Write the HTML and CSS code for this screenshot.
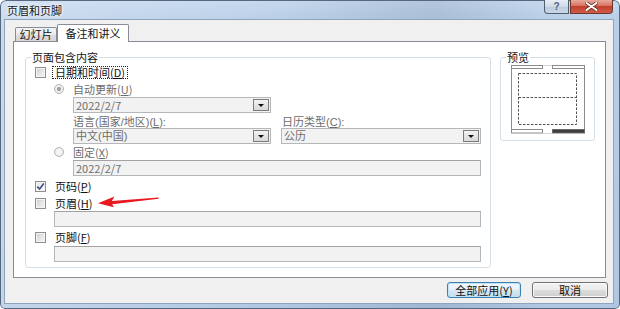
FILE: index.html
```html
<!DOCTYPE html>
<html lang="zh-CN">
<head>
<meta charset="utf-8">
<title>页眉和页脚</title>
<link rel="stylesheet" href="styles.css">
</head>
<body>
<div class="window">
  <div class="titlebar">
    <span class="title">页眉和页脚</span>
    <div class="caption">
      <div class="cap-btn cap-help">?</div>
      <div class="cap-btn cap-close">
        <svg width="13" height="9" viewBox="0 0 13 9"><path d="M1.5 1 L11.5 8 M11.5 1 L1.5 8" stroke="#6a2c26" stroke-width="3.4" stroke-linecap="round"/><path d="M1.5 1 L11.5 8 M11.5 1 L1.5 8" stroke="#fff" stroke-width="2" stroke-linecap="round"/></svg>
      </div>
    </div>
  </div>
  <div class="client">
    <div class="tabs">
      <div class="tab">幻灯片</div>
      <div class="tab active">备注和讲义</div>
    </div>
    <div class="panel">
      <div class="group main">
        <div class="legend">页面包含内容</div>
        <div class="row row-1">
          <span class="cb"></span><span class="label focus">日期和时间(<u>D</u>)</span>
        </div>
        <div class="row radio-row row-2">
          <span class="rb on"></span><span class="label dis">自动更新(<u>U</u>)</span>
        </div>
        <div class="combo combo-1"><span class="ctext">2022/2/7</span><span class="drop"></span></div>
        <div class="pair-labels">
          <span class="dis">语言(国家/地区)(<u>L</u>):</span>
          <span class="dis second">日历类型(<u>C</u>):</span>
        </div>
        <div class="pair-combos">
          <div class="combo"><span class="ctext">中文(中国)</span><span class="drop"></span></div>
          <div class="combo"><span class="ctext">公历</span><span class="drop"></span></div>
        </div>
        <div class="row radio-row row-fixed">
          <span class="rb"></span><span class="label dis">固定(<u>X</u>)</span>
        </div>
        <div class="textbox tb-fixed"><span class="ctext">2022/2/7</span></div>
        <div class="row row-page">
          <span class="cb checked"><svg width="9" height="9" viewBox="0 0 9 9"><path d="M1.3 4.6 L3.6 7 L7.8 1.6" fill="none" stroke="#3a4f86" stroke-width="1.6"/></svg></span><span class="label">页码(<u>P</u>)</span>
        </div>
        <div class="row row-header">
          <span class="cb"></span><span class="label">页眉(<u>H</u>)</span>
          <svg class="arrow" width="63" height="13" viewBox="0 0 63 13"><polygon points="1,8.3 17.5,1.5 14.8,5.9 61.5,2.4 61.5,3.8 15.2,9.2 16.8,12.3" fill="#e8191f"/></svg>
        </div>
        <div class="textbox tb-wide"></div>
        <div class="row row-footer">
          <span class="cb"></span><span class="label">页脚(<u>F</u>)</span>
        </div>
        <div class="textbox tb-wide tb-last"></div>
      </div>
      <div class="group preview">
        <div class="legend">预览</div>
        <svg class="pv" width="74" height="69" viewBox="0 0 74 69">
          <line x1="0.5" y1="3" x2="0.5" y2="66" stroke="#8c8c8c"/>
          <line x1="73.5" y1="3" x2="73.5" y2="66" stroke="#8c8c8c"/>
          <line x1="32" y1="0.5" x2="41" y2="0.5" stroke="#d4d4d4"/>
          <line x1="32" y1="68.5" x2="41" y2="68.5" stroke="#d4d4d4"/>
          <rect x="0.5" y="0.5" width="31" height="3" fill="#fff" stroke="#8c8c8c"/>
          <rect x="41.5" y="0.5" width="32" height="3" fill="#fff" stroke="#8c8c8c"/>
          <rect x="7.5" y="8.5" width="58" height="51" fill="none" stroke="#505050" stroke-dasharray="2.5 1.5"/>
          <line x1="7.5" y1="32.5" x2="65.5" y2="32.5" stroke="#505050" stroke-dasharray="2.5 1.5"/>
          <rect x="0.5" y="64.5" width="31" height="3.5" fill="#fff" stroke="#8c8c8c"/>
          <rect x="41.5" y="64.5" width="32" height="3.5" fill="#3c3c3c" stroke="#6a6a6a"/>
        </svg>
      </div>
    </div>
    <div class="buttons">
      <button class="btn btn-default">全部应用(<u>Y</u>)</button>
      <button class="btn btn-cancel">取消</button>
    </div>
  </div>
</div>
</body>
</html>
```

FILE: styles.css
```css
* { box-sizing: border-box; }
html, body { margin: 0; padding: 0; background: #ffffff; }
body {
  width: 620px;
  height: 309px;
  overflow: hidden;
  font-family: "Noto Sans CJK SC", "Noto Sans", sans-serif;
  font-size: 11px;
  color: #111;
}
u { text-decoration-thickness: 1px; text-underline-offset: 1px; }

.window {
  width: 620px;
  height: 309px;
  display: flex;
  flex-direction: column;
  border-radius: 6px 6px 5px 5px;
  overflow: hidden;
  background:
    linear-gradient(90deg, rgba(255,255,255,0.25) 0, rgba(255,255,255,0) 45%, rgba(90,110,135,0.18) 70%, rgba(255,255,255,0) 88%),
    linear-gradient(180deg, #c6d9ee 0, #b9cfe8 20px, #afc7e3 100%);
  box-shadow: inset 0 0 0 1px #56687e;
}

.titlebar {
  height: 20px;
  flex: none;
  display: flex;
  align-items: flex-start;
  padding: 0 7px 0 7px;
}
.title {
  margin-top: 4px;
  line-height: 12px;
  color: #151515;
  text-shadow: 0 0 5px #fff, 0 0 3px #fff;
}
.caption { margin-left: auto; display: flex; gap: 1px; }
.cap-btn {
  height: 14px;
  display: flex;
  align-items: center;
  justify-content: center;
  border: 1px solid #4e5d6f;
  border-top: none;
}
.cap-help {
  width: 25px;
  border-radius: 0 0 0 4px;
  background: linear-gradient(180deg, #e6edf5 0, #cfdbe8 50%, #bccbdc 51%, #cad7e5 100%);
  font-family: "Liberation Sans", sans-serif;
  font-weight: bold;
  font-size: 10px;
  color: #56667a;
  line-height: 12px;
}
.cap-close {
  width: 43px;
  border-radius: 0 0 4px 0;
  border-color: #6a3631;
  background: linear-gradient(180deg, #e9a99e 0, #d7735f 45%, #c2402c 50%, #cf5c49 100%);
}
.cap-close svg { display: block; }

.client {
  flex: 1;
  margin: 0 7px 6px 5px;
  padding: 4px 5px 0 8px;
  background: #f0f0f0;
  box-shadow: 0 0 0 1px #8ea4bc;
  display: flex;
  flex-direction: column;
}

.tabs {
  height: 17px;
  flex: none;
  display: flex;
  align-items: flex-end;
  padding-left: 2px;
  position: relative;
  z-index: 1;
}
.tab {
  width: 42px;
  height: 14px;
  border: 1px solid #898c95;
  border-bottom: none;
  border-radius: 2px 2px 0 0;
  background: linear-gradient(180deg, #f3f3f3 0, #ebebeb 50%, #dddddd 51%, #d6d6d6 100%);
  line-height: 12px;
  text-align: center;
  color: #151515;
}
.tab.active {
  width: 72px;
  height: 18px;
  margin-bottom: -1px;
  background: #ffffff;
  padding-top: 2px;
}

.panel {
  flex: none;
  margin-right: 2px;
  background: #ffffff;
  border: 1px solid #898c95;
  display: flex;
  align-items: flex-start;
  gap: 9px;
  padding: 15px 0 9px 11px;
}

.group {
  border: 1px solid #d5dfe5;
  border-radius: 3px;
}
.legend {
  width: fit-content;
  height: 12px;
  line-height: 12px;
  margin: -7px 0 0 5px;
  padding: 0 1px;
  background: #ffffff;
  color: #151515;
}
.main { width: 466px; padding-bottom: 5px; }
.preview { width: 95px; padding-bottom: 6px; }
.pv { display: block; margin: 2px 0 0 10px; }

.row {
  height: 16px;
  display: flex;
  align-items: center;
  line-height: 12px;
}
.row-1 { margin-top: 1px; }
.row-2 { margin-top: 2px; height: 14px; }
.row-fixed { margin-top: 1px; height: 14px; }
.row-page { margin-top: 2px; }
.row-header { margin-top: 1px; position: relative; }
.row-footer { margin-top: 2px; }

.cb {
  width: 11px;
  height: 11px;
  margin-left: 9px;
  flex: none;
  border: 1px solid #8f8f8f;
  background: linear-gradient(135deg, #c9cbce 0, #e6e7e8 55%, #f6f6f6 100%);
  box-shadow: inset 0 0 0 1px #f4f4f4;
  display: flex;
  align-items: center;
  justify-content: center;
}
.cb.checked { background: linear-gradient(135deg, #e2e3e5 0, #f4f4f4 60%, #ffffff 100%); }
.cb svg { display: block; }
.label { margin-left: 9px; white-space: nowrap; }
.label.focus {
  margin-left: 6px;
  height: 13px;
  padding: 0 2px;
  border: 1px dotted #222;
  display: flex;
  align-items: center;
}
.rb {
  width: 10px;
  height: 10px;
  flex: none;
  margin-left: 28px;
  border-radius: 50%;
  border: 1px solid #b3b3b3;
  background: radial-gradient(circle, #f9f9f9 0, #e9e9e9 100%);
}
.rb.on {
  background: radial-gradient(circle, #9c9c9c 0, #a8a8a8 1.8px, #ececec 2.4px, #f7f7f7 100%);
}
.dis { color: #6d6d6d; }

.combo, .textbox {
  height: 16px;
  border: 1px solid #b5b7ba;
  background: #f2f2f2;
  display: flex;
  align-items: center;
  line-height: 12px;
  color: #6d6d6d;
}
.pair-labels, .pair-combos .combo {
  font-family: "Liberation Sans", "Noto Sans CJK SC", sans-serif;
}
.ctext { padding-left: 2px; white-space: nowrap; }
.combo-1 { width: 198px; margin: 1px 0 0 47px; }
.drop {
  margin-left: auto;
  margin-right: 1px;
  width: 16px;
  height: 12px;
  flex: none;
  border: 1px solid #7b7b7b;
  background: linear-gradient(180deg, #f4f4f4 0, #e4e4e4 50%, #d9d9d9 100%);
  display: flex;
  align-items: center;
  justify-content: center;
}
.drop::after {
  content: "";
  width: 0;
  height: 0;
  border-left: 3px solid transparent;
  border-right: 3px solid transparent;
  border-top: 3px solid #111;
}
.pair-labels {
  margin: 3px 0 0 47px;
  height: 12px;
  line-height: 12px;
  display: grid;
  grid-template-columns: 198px 200px;
  column-gap: 10px;
}
.pair-labels .second { padding-left: 1px; }
.pair-combos {
  margin-left: 47px;
  display: grid;
  grid-template-columns: 198px 200px;
  column-gap: 10px;
}
.textbox { border-top-color: #a3a3a3; }
.tb-fixed { width: 408px; margin: 1px 0 0 47px; }
.tb-wide { width: 427px; margin-left: 28px; }
.tb-last { margin-top: 1px; }

.arrow {
  position: absolute;
  left: 71px;
  top: 0;
}

.buttons {
  display: flex;
  justify-content: flex-end;
  gap: 11px;
  margin-top: 4px;
}
.btn {
  height: 16px;
  padding: 0;
  font-family: inherit;
  font-size: 11px;
  line-height: 12px;
  color: #111;
  border: 1px solid #707070;
  border-radius: 3px;
  background: linear-gradient(180deg, #f2f2f2 0, #ebebeb 49%, #dddddd 50%, #cfcfcf 100%);
  box-shadow: inset 0 0 0 1px #fbfbfb;
}
.btn-default {
  width: 74px;
  border-color: #3c7fb1;
  box-shadow: inset 0 0 0 1px #bfe3f7;
  background: linear-gradient(180deg, #f2f7fb 0, #e8f1f8 49%, #d6e6f2 50%, #c8dcec 100%);
}
.btn-cancel { width: 76px; }
```
